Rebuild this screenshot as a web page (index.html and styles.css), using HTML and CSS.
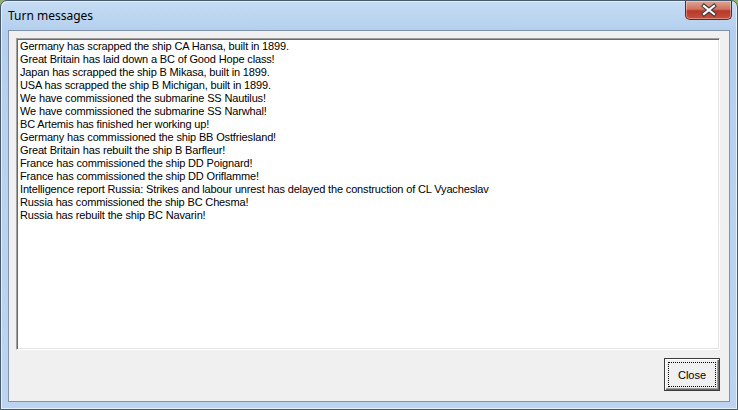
FILE: index.html
```html
<!DOCTYPE html>
<html>
<head>
	<meta http-equiv="Content-Type" content="text/html; charset=utf-8"/>
	<title>Turn messages</title>
	<link rel="stylesheet" href="styles.css">
</head>
<body>
<div class="window">
	<div class="titlebar">
		<span class="title">Turn messages</span>
		<div class="close_btn">
			<svg width="18" height="14" viewBox="0 0 18 14">
				<path d="M4 3 L14 11 M14 3 L4 11" stroke="#3b3b3b" stroke-width="4.2" stroke-linecap="square" fill="none"/>
				<path d="M4 3 L14 11 M14 3 L4 11" stroke="#ffffff" stroke-width="2.2" stroke-linecap="square" fill="none"/>
			</svg>
		</div>
	</div>
	<div class="client">
		<div class="memo">
			<div>Germany has scrapped the ship CA Hansa, built in 1899.</div>
			<div>Great Britain has laid down a BC of Good Hope class!</div>
			<div>Japan has scrapped the ship B Mikasa, built in 1899.</div>
			<div>USA has scrapped the ship B Michigan, built in 1899.</div>
			<div>We have commissioned the submarine SS Nautilus!</div>
			<div>We have commissioned the submarine SS Narwhal!</div>
			<div>BC Artemis has finished her working up!</div>
			<div>Germany has commissioned the ship BB Ostfriesland!</div>
			<div>Great Britain has rebuilt the ship B Barfleur!</div>
			<div>France has commissioned the ship DD Poignard!</div>
			<div>France has commissioned the ship DD Oriflamme!</div>
			<div>Intelligence report Russia: Strikes and labour unrest has delayed the construction of CL Vyacheslav</div>
			<div>Russia has commissioned the ship BC Chesma!</div>
			<div>Russia has rebuilt the ship BC Navarin!</div>
		</div>
		<div class="footer">
			<button class="btn"><span class="focus">Close</span></button>
		</div>
	</div>
</div>
</body>
</html>
```

FILE: styles.css
```css
/* =====reset===== */
body, div, span { padding: 0; margin: 0; }
html, body { width: 738px; height: 410px; overflow: hidden; }
body { background: #8fb36a; }

/* =====window frame===== */
.window { width: 738px; height: 410px; box-sizing: border-box; border: 1px solid #4a5a6e; border-radius: 7px 7px 0 0;
	background: linear-gradient(#c6dcf3, #b4cfee 30px, #b9d2ee 200px, #bcd4ef); display: flex; flex-direction: column;
	box-shadow: inset 1px 1px 0 #e6f0fb, inset -1px -1px 0 #e6f0fb; }
.titlebar { height: 29px; display: flex; align-items: flex-start; padding-left: 7px; }
.title { font-family: "Noto Sans", "Open Sans", sans-serif; font-size: 12px; color: #000; margin-top: 6px; }
.close_btn { margin-left: auto; margin-right: 5px; width: 47px; height: 19px; box-sizing: border-box;
	border: 1px solid #5b2a2a; border-top: 0; border-radius: 0 0 5px 5px;
	background: linear-gradient(#e0a493, #cf7462 45%, #b8382a 55%, #c8503c);
	box-shadow: inset 0 0 0 1px rgba(255,255,255,0.35);
	display: flex; align-items: center; justify-content: center; }
.close_btn svg { display: block; }

/* =====client area===== */
.client { flex: 1; margin: 0 7px 7px 7px; border: 1px solid #7f93ab; background: #f0f0f0;
	display: flex; flex-direction: column; padding: 7px 9px 10px 7px; }
.memo { flex: 1; background: #fff; border-top: 1px solid #a0a0a0; border-left: 1px solid #a0a0a0;
	border-bottom: 1px solid #fff; border-right: 1px solid #fff;
	box-shadow: inset 1px 1px 0 #696969, inset -1px -1px 0 #e3e3e3;
	padding: 1px 3px; font-family: "Liberation Sans", Arial, sans-serif; font-size: 11px; line-height: 13px; color: #000;
	letter-spacing: -0.15px; }
.footer { display: flex; justify-content: flex-end; padding-top: 8px; }
.btn { width: 56px; height: 33px; padding: 3px; box-sizing: border-box; background: #f0f0f0; border: 1px solid #3c3c3c;
	box-shadow: inset 1px 1px 0 #fff, inset -1px -1px 0 #696969, inset -2px -2px 0 #a0a0a0;
	font-family: "Liberation Sans", Arial, sans-serif; font-size: 11px; color: #000; display: flex; }
.focus { flex: 1; border: 1px dotted #000; display: flex; align-items: center; justify-content: center; }
```
